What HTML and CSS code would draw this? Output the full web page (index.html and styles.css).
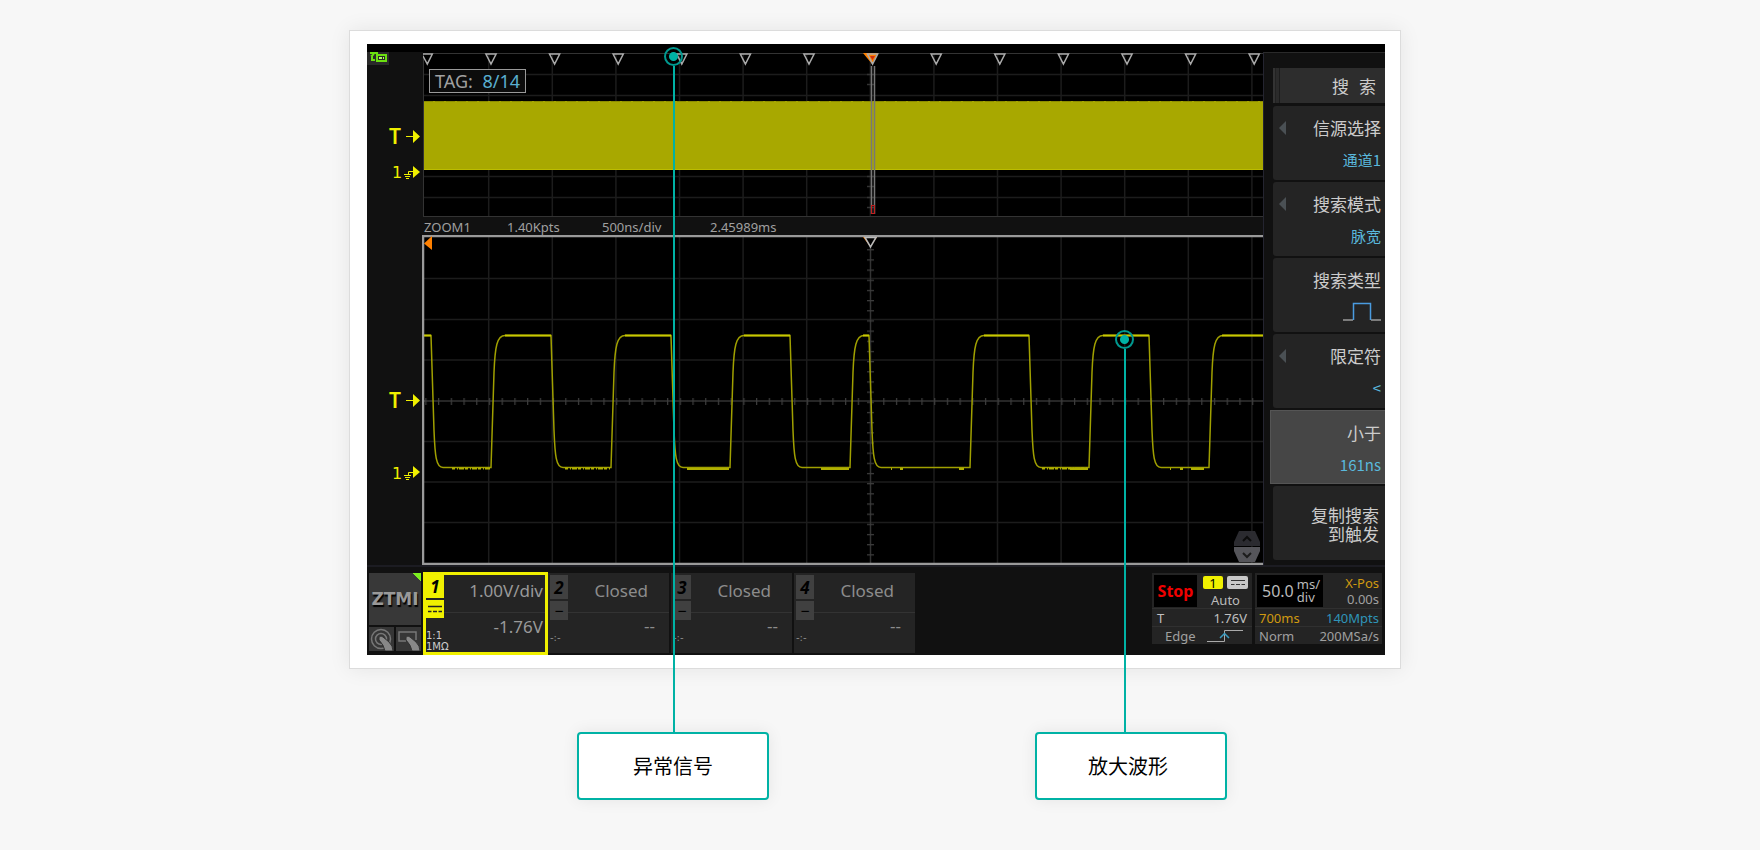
FILE: index.html
```html
<!doctype html>
<html lang="zh-CN">
  <head>
    <meta charset="UTF-8" />
    <meta name="viewport" content="width=device-width, initial-scale=1.0" />
    <title>异常信号搜索</title>
    <link rel="stylesheet" href="styles.css">
  </head>
  <body>
    <main class="stage">
      <div class="card">
        <div class="screen">
          <div class="work">
            <svg class="gutter" viewBox="0 0 56 513" width="56" height="513">
              <!-- usb / remote indicator -->
              <rect x="0" y="0" width="22" height="13" fill="#2a2a2a" />
              <g fill="none" stroke="#6be010" stroke-width="2">
                <path d="M3 1H11M7 2L4 4.500M5 4V8H8" />
                <rect x="10" y="3" width="9" height="6" />
              </g>
              <path d="M12 5h3v2h-3zM16 5h1v2h-1z" fill="#b0ff60" />
              <g fill="#f0f000">
                <text class="mark-t" x="22" y="92">T</text>
                <path d="M39 84h7v-6l7 6.500-7 6.500v-6h-7z" />
                <text class="mark-n" x="25" y="126">1</text>
                <path d="M46 114l7 6-7 6z" />
                <text class="mark-t" x="22" y="356">T</text>
                <path d="M39 348h7v-6l7 6.500-7 6.500v-6h-7z" />
                <text class="mark-n" x="25" y="427">1</text>
                <path d="M46 414l7 6-7 6z" />
              </g>
              <g fill="none" stroke="#f0f000">
                <path d="M47 119.500H41.500V123M37 122.500H44M38 124.500H43M39 126.500H42" />
                <path d="M47 420.500H41.500V424M37 423.500H44M38 425.500H43M39 427.500H42" />
              </g>
            </svg>

            <div class="plots">
              <div class="overview">
                <svg class="plot" viewBox="0 0 840 165" height="165" preserveAspectRatio="none">
                  <path class="grid" d="M65.700 1V165M129.300 1V165M192.900 1V165M256.500 1V165M320.100 1V165M383.700 1V165M447.300 1V165M510.900 1V165M574.500 1V165M638.100 1V165M701.700 1V165M765.300 1V165M828.900 1V165M0 22.500H840M0 43.500H840M0 124.500H840M0 145.500H840" />
                  <path class="frame" d="M.5 165V1.500H840M0 164.500H840" />
                  <path class="axis" d="M444 32.500h7M444 22.500h7M444 134.500h7M444 124.500h7M444 145.500h7M444 155.500h7" />
                  <rect x="1" y="49" width="839" height="69" fill="#a8a800" />
                  <path d="M1 117.500H840" stroke="#bcbc00" />
                  <path d="M1 49.500H840" stroke="#8c8c00" stroke-dasharray="9 2" />
                  <path d="M440 1H455L449 12z" fill="#ff8000" />
                  <path d="M448.500 14V162M451.500 14V162" stroke="#777" stroke-width="1.500" />
                  <rect x="448.500" y="153.500" width="3" height="8" fill="none" stroke="#c02020" />
                  <path class="tags" d="M0 2H9.300L4.300 12L0 4M62.900 2H73.100L68 12zM126.500 2H136.700L131.600 12zM190.100 2H200.300L195.200 12zM253.700 2H263.900L258.800 12zM317.300 2H327.500L322.400 12zM380.900 2H391.100L386 12zM444.500 2H454.700L449.600 12zM508.100 2H518.300L513.200 12zM571.700 2H581.900L576.800 12zM635.300 2H645.500L640.400 12zM698.900 2H709.100L704 12zM762.500 2H772.700L767.600 12zM826.100 2H836.300L831.200 12z" />
                  <path d="M447 4h5l-2.500 4z" fill="#d03010" />
                </svg>
                <div class="tag-count">TAG: <span>8/14</span></div>
              </div>

              <div class="zoom-info">
                <span>ZOOM1</span>
                <span>1.40Kpts</span>
                <span>500ns/div</span>
                <span>2.45989ms</span>
              </div>

              <div class="zoomed">
                <svg class="plot" viewBox="0 0 841 330" height="330" preserveAspectRatio="none">
                  <defs>
                    <pattern id="ticks-x" x="16" y="0" width="12.72" height="7" patternUnits="userSpaceOnUse">
                      <path d="M.5 0V7" stroke="#3c3c3c" stroke-width="1.500" />
                    </pattern>
                    <pattern id="ticks-y" x="0" y="4" width="7" height="10.170" patternUnits="userSpaceOnUse">
                      <path d="M0 .5H7" stroke="#3c3c3c" stroke-width="1.500" />
                    </pattern>
                  </defs>
                  <path class="grid" d="M66.700 2V329M130.300 2V329M193.900 2V329M257.500 2V329M321.100 2V329M384.700 2V329M512 2V329M575.500 2V329M639.100 2V329M702.700 2V329M766.300 2V329M829.900 2V329M2 43.500H841M2 84.500H841M2 125H841M2 206.500H841M2 247H841M2 287.500H841" />
                  <path class="axis" d="M448.500 2V329M2 166H841" />
                  <g transform="translate(0 163)">
                    <rect x="2" width="839" height="7" fill="url(#ticks-x)" />
                  </g>
                  <g transform="translate(445 0)">
                    <rect y="2" width="7" height="326" fill="url(#ticks-y)" />
                  </g>
                  <path class="wave" d="M2 100.500H9l3 95c1 25 2 37 9 37H69l3-95c1-26 3-37 11-37H129l3 95c1 25 2 37 9 37H189l3-95c1-26 3-37 11-37H249l3 95c1 25 2 37 9 37H308l3-95c1-26 3-37 11-37H368l3 95c1 25 2 37 9 37H428l3-95c1-26 3-37 11-37H447l3 95c1 25 2 37 9 37H548l3-95c1-26 3-37 11-37H607l3 95c1 25 2 37 9 37H667l3-95c1-26 3-37 11-37H727l3 95c1 25 2 37 9 37H787l3-95c1-26 3-37 11-37H841" />
                  <path class="wave-top" d="M2 100.500H9M83 100.500H129M203 100.500H249M322 100.500H368M441 100.500H447M562 100.500H607M681 100.500H727M800 100.500H841" />
                  <path class="noise" d="M30 233.500H68M143 233.500H188M620 233.500H666" />
                  <path class="noise-low" d="M265 234H307M399 234H427M469 234h1M478 234h3M537 234h5M648 234H666M748 234h1M758 234h3M769 234H782" />
                  <path d="M0 1H841M1 0V330M0 329H841" stroke="#9a9a9a" stroke-width="2.500" />
                  <path d="M2 8.500L10 1V15z" fill="#ff8000" />
                  <path d="M441 2H455L448.500 12z" fill="#ff8000" />
                  <path d="M443 2.500H454L448.500 12z" fill="#000" stroke="#bbb" stroke-width="1.500" />
                </svg>
                <div class="scroller">
                  <button class="scroll-up" aria-label="上移">
                    <svg viewBox="0 0 26 15" width="26" height="15">
                      <path d="M5 0H21L26 11V15H0V11z" fill="#2b2b30" />
                      <path d="M9 10l4-4 4 4" fill="none" stroke="#0c0c0c" stroke-width="2" />
                    </svg>
                  </button>
                  <button class="scroll-down" aria-label="下移">
                    <svg viewBox="0 0 26 15" width="26" height="15">
                      <path d="M0 0H26V4L21 15H5L0 4z" fill="#55555a" />
                      <path d="M9 6l4 4 4-4" fill="none" stroke="#1c1c1c" stroke-width="2" />
                    </svg>
                  </button>
                </div>
              </div>
            </div>

            <nav class="menu">
              <h1 class="menu-title"><span>搜</span><span>索</span></h1>
              <button class="menu-item has-more"><span>信源选择</span><span class="value">通道1</span></button>
              <button class="menu-item has-more"><span>搜索模式</span><span class="value">脉宽</span></button>
              <button class="menu-item">
                <span>搜索类型</span>
                <svg class="pulse" viewBox="0 0 38 20" width="38" height="20" fill="none">
                  <path d="M0 18H10M28 18H38" stroke="#999" stroke-width="1.500" />
                  <path d="M10.500 18V1.500H27.500V18" stroke="#4a9be0" stroke-width="1.500" />
                </svg>
              </button>
              <button class="menu-item has-more"><span>限定符</span><span class="value">&lt;</span></button>
              <button class="menu-item active"><span>小于</span><span class="value">161ns</span></button>
              <button class="menu-item copy"><span>复制搜索<br>到触发</span></button>
            </nav>
          </div>

          <footer class="status">
            <div class="brand">
              <div class="logo">ZTMI</div>
              <button class="touch" aria-label="触摸">
                <svg viewBox="0 0 25 24" width="25" height="24">
                  <g fill="none" stroke="#777" stroke-width="1.500">
                    <circle cx="12" cy="12" r="9.500" />
                    <circle cx="12" cy="12" r="5.500" />
                  </g>
                  <path d="M10 10q2-2 4 0l6 5q4 4 4 9h-8q-1-6-6-11z" fill="#888" stroke="#333" />
                </svg>
              </button>
              <button class="touch" aria-label="按键">
                <svg viewBox="0 0 25 24" width="25" height="24">
                  <path d="M20 13V5H3V14H10" fill="none" stroke="#777" stroke-width="1.500" />
                  <path d="M10 10q2-2 4 0l6 5q4 4 4 9h-8q-1-6-6-11z" fill="#888" stroke="#333" />
                </svg>
              </button>
            </div>

            <button class="channel on">
              <span class="side">
                <b>1</b>
                <i><svg viewBox="0 0 16 8" width="16" height="8"><path d="M1 1.500H15M1 6.500H4.500M6 6.500H10M11.500 6.500H15" stroke="#222" stroke-width="1.500" /></svg></i>
                <small>1:1<br>1MΩ</small>
              </span>
              <span class="reading"><span>1.00V/div</span><span>-1.76V</span></span>
            </button>
            <button class="channel">
              <span class="side"><b>2</b><i>−</i><small>-:-</small></span>
              <span class="reading"><span>Closed</span><span>--</span></span>
            </button>
            <button class="channel">
              <span class="side"><b>3</b><i>−</i><small>-:-</small></span>
              <span class="reading"><span>Closed</span><span>--</span></span>
            </button>
            <button class="channel">
              <span class="side"><b>4</b><i>−</i><small>-:-</small></span>
              <span class="reading"><span>Closed</span><span>--</span></span>
            </button>

            <div class="box trigger">
              <div class="box-head">
                <strong class="stop">Stop</strong>
                <div class="source">
                  <span class="src">1</span>
                  <span class="coupling"><svg viewBox="0 0 16 8" width="16" height="8"><path d="M1 1.500H15M1 5.500H4.500M6 5.500H10M11.500 5.500H15" stroke="#333" /></svg></span>
                  <span class="auto">Auto</span>
                </div>
              </div>
              <div class="row bright"><span>T</span><span>1.76V</span></div>
              <div class="row edge">
                <span>Edge</span>
                <svg viewBox="0 0 36 14" width="36" height="14" fill="none">
                  <path d="M0 12.500H17.500V1.500H36" stroke="#aaa" />
                  <path d="M13 9l4.500-4.500L22 9" stroke="#3a9cc0" stroke-width="1.500" />
                </svg>
              </div>
            </div>

            <div class="box timebase">
              <div class="box-head">
                <div class="scale"><span>50.0</span><span class="unit">ms/<br>div</span></div>
                <div class="pos"><span class="amber">X-Pos</span><span>0.00s</span></div>
              </div>
              <div class="row"><span class="amber">700ms</span><span class="blue">140Mpts</span></div>
              <div class="row"><span>Norm</span><span>200MSa/s</span></div>
            </div>
          </footer>
        </div>
      </div>

      <div class="callouts">
        <div class="callout abnormal">
          <span class="dot"></span>
          异常信号
        </div>
        <div class="callout enlarged">
          <span class="dot"></span>
          放大波形
        </div>
      </div>
    </main>
  </body>
</html>
```

FILE: styles.css
```css
* {
  box-sizing: border-box;
}
body {
  margin: 0;
  background-color: #f7f7f7;
  font-family: "Noto Sans", "Noto Sans CJK SC", sans-serif;
}
button {
  border: none;
  padding: 0;
  font: inherit;
  color: inherit;
  cursor: pointer;
}
svg {
  display: block;
}
.stage {
  max-width: 1062px;
  margin: 0 auto;
  padding: 30px 10px 40px 0;
}
.card {
  padding: 13px 15px 13px 17px;
  background-color: #fff;
  border: 1px solid #dcdcdc;
  box-shadow: 0 0 20px rgba(0, 0, 0, 0.08);
}
.screen {
  padding-top: 8px;
  background-color: #000;
  color: #a0a0a0;
}

/* plots */
.work {
  display: grid;
  grid-template-columns: 55px 1fr 122px;
  background-color: #111;
}
.gutter {
  width: 56px;
}
.mark-t {
  font: 600 21px "Noto Sans", sans-serif;
}
.mark-n {
  font: 16px "DejaVu Sans", sans-serif;
}
.overview {
  position: relative;
  margin-left: 1px;
  background-color: #000;
}
.plot {
  width: 100%;
}
.grid {
  stroke: #1c1c1c;
  stroke-width: 1.5;
}
.frame {
  fill: none;
  stroke: #333;
}
.axis {
  stroke: #333;
  stroke-width: 1.5;
}
.tags {
  fill: none;
  stroke: #aaa;
  stroke-width: 1.5;
}
.tag-count {
  position: absolute;
  left: 6px;
  top: 17px;
  height: 24px;
  padding: 0 5px;
  border: 1px solid #999;
  background-color: #0c0c0c;
  font-size: 18px;
  line-height: 22px;
  white-space: pre;
}
.tag-count span {
  color: #5aafd0;
  margin-left: 5px;
}
.zoom-info {
  display: grid;
  grid-template-columns: 83px 95px 108px 1fr;
  height: 18px;
  padding-left: 2px;
  font-size: 13px;
  line-height: 20px;
}
.zoomed {
  position: relative;
  background-color: #000;
}
.wave {
  fill: none;
  stroke: #a0a000;
  stroke-width: 1.5;
}
.wave-top {
  stroke: #c8c800;
  stroke-width: 2;
}
.noise,
.noise-low {
  stroke: #b0b000;
  stroke-width: 2;
}
.noise {
  stroke-dasharray: 3 2 1 1 5 1;
}
.scroller {
  position: absolute;
  right: 3px;
  bottom: 3px;
}
.scroller button {
  display: block;
  background: none;
  margin-top: 1px;
}

/* side menu */
.menu {
  display: flex;
  flex-direction: column;
  gap: 2px;
  padding: 15px 0 3px 6px;
  border-top: 1px solid #2a2a2a;
  border-left: 1px solid #242430;
  color: #ccc;
  font-family: "Noto Sans CJK SC", sans-serif;
  font-size: 17px;
}
.menu-title {
  display: flex;
  justify-content: flex-end;
  gap: 10px;
  height: 35px;
  margin: 0 0 1px 3px;
  padding-right: 9px;
  background: linear-gradient(90deg, #333 2px, #222 2px, #222 3px, #2b2b2b 3px, #2b2b2b 6px, #1c1c1c 6px, #1c1c1c 7px, #2d2d2d 7px);
  font-size: 17px;
  font-weight: normal;
  line-height: 35px;
}
.menu-item {
  position: relative;
  display: flex;
  flex-direction: column;
  align-items: flex-end;
  height: 74px;
  margin-left: 3px;
  padding: 10px 4px 0 0;
  border-radius: 3px 0 0 3px;
  background-color: #242424;
  line-height: 24px;
}
.menu-item .value {
  margin-top: 8px;
  color: #5ab8dc;
  font-size: 15px;
}
.menu-item.active {
  margin-left: 0;
  border: 1px solid #555;
  border-right: none;
  border-radius: 0;
  background-color: #464646;
}
.has-more::before {
  content: "";
  position: absolute;
  left: 6px;
  top: 15px;
  border: 7px solid transparent;
  border-left: none;
  border-right-color: #4a5054;
}
.pulse {
  margin-top: 10px;
}
.menu-item.copy {
  padding: 19px 6px 0 0;
  line-height: 19px;
  text-align: right;
}

/* bottom bar */
.status {
  display: flex;
  align-items: flex-start;
  gap: 2px;
  height: 90px;
  padding: 6px 3px 0 2px;
  border-top: 2px solid #1c1c22;
  background-color: #111;
}
.brand {
  display: grid;
  grid-template-columns: 25px 25px;
  gap: 2px;
}
.logo {
  grid-column: 1 / 3;
  height: 52px;
  background: linear-gradient(225deg, #7cf020 6px, #383838 6px);
  font: bold 17px/52px "DejaVu Sans", sans-serif;
  text-align: center;
  color: #999;
  text-shadow: 1px 2px 1px #000;
}
.touch {
  height: 24px;
  background-color: #363636;
}
.channel {
  display: flex;
  width: 121px;
  height: 80px;
  padding: 2px 0 0 2px;
  background-color: #242424;
  color: #8c8c8c;
  text-align: left;
}
.channel.on {
  width: 125px;
  height: 83px;
  margin: -1px -2px 0 0;
  padding: 0;
  border: 3px solid #f0f000;
  color: #999;
}
.side {
  display: flex;
  flex-direction: column;
  flex: none;
  gap: 2px;
  width: 18px;
}
.side b,
.side i {
  display: flex;
  align-items: center;
  justify-content: center;
  background-color: #404040;
  color: #000;
}
.side b {
  height: 24px;
  font-size: 17px;
  font-style: italic;
}
.side i {
  height: 19px;
  font-style: normal;
}
.on .side b,
.on .side i {
  background-color: #f0f000;
}
.side small {
  margin-top: 10px;
  font: 10px/11px "DejaVu Sans", sans-serif;
  white-space: nowrap;
}
.on .side small {
  color: #ccc;
}
.reading {
  display: flex;
  flex-direction: column;
  flex: 1;
  font-size: 17px;
}
.reading span {
  height: 37px;
  padding-right: 21px;
  line-height: 32px;
  text-align: right;
}
.reading span + span {
  padding-right: 14px;
  border-top: 1px solid #333;
  line-height: 26px;
}
.on .reading span {
  padding-right: 2px;
}
.on .reading span + span {
  line-height: 28px;
}
.box {
  flex: none;
  height: 71px;
  background-color: #242424;
  font-size: 13px;
}
.trigger {
  width: 100px;
  margin-left: auto;
}
.timebase {
  width: 127px;
  margin-left: 1px;
}
.box-head {
  display: flex;
  height: 35px;
  padding: 2px 3px 1px 2px;
}
.stop {
  width: 43px;
  background-color: #000;
  color: #f00000;
  font-size: 16px;
  line-height: 33px;
  text-align: center;
}
.source {
  display: grid;
  grid-template-columns: 20px 21px;
  grid-template-rows: 13px 1fr;
  gap: 2px 4px;
  padding: 1px 0 0 6px;
  color: #bbb;
}
.src,
.coupling {
  display: flex;
  align-items: center;
  justify-content: center;
  border-radius: 2px;
  background-color: #f0f000;
  color: #000;
}
.coupling {
  background-color: #c8c8c8;
}
.auto {
  grid-column: 1 / 3;
  line-height: 18px;
  text-align: center;
}
.row {
  display: flex;
  justify-content: space-between;
  height: 18px;
  padding: 0 5px;
  border-top: 1px solid #303030;
  line-height: 18px;
}
.bright {
  color: #c0c0c0;
}
.edge {
  padding: 0 9px 0 13px;
  align-items: center;
}
.timebase .row {
  padding: 0 3px 0 4px;
}
.scale {
  display: flex;
  align-items: center;
  justify-content: space-between;
  width: 66px;
  padding: 0 3px 0 5px;
  background-color: #000;
  color: #bbb;
  font-size: 16px;
}
.unit {
  font-size: 13px;
  line-height: 13px;
}
.pos {
  display: flex;
  flex-direction: column;
  flex: 1;
  line-height: 16px;
  text-align: right;
}
.amber {
  color: #d09a10;
}
.blue {
  color: #2f94b8;
}

/* callouts under the screen */
.callouts {
  display: flex;
  gap: 266px;
  margin-top: 63px;
  padding-left: 228px;
}
.callout {
  position: relative;
  width: 192px;
  height: 68px;
  border: 2px solid #00b2a5;
  border-radius: 4px;
  background-color: #fff;
  box-shadow: 0 0 16px rgba(0, 0, 0, 0.08);
  color: #000;
  font: 20px/64px "Noto Sans CJK SC", sans-serif;
  text-align: center;
}
.callout::before {
  content: "";
  position: absolute;
  left: 94px;
  bottom: 100%;
  width: 2px;
  height: 668px;
  background-color: #00b2a5;
}
.dot {
  position: absolute;
  left: 85px;
  bottom: 732px;
  width: 19px;
  height: 19px;
  border: 2px solid #00988f;
  border-radius: 50%;
  background: radial-gradient(circle, #00b2a5 4px, transparent 5px);
}
.enlarged {
  padding-right: 6px;
}
.enlarged::before {
  left: 87px;
  height: 385px;
}
.enlarged .dot {
  left: 78px;
  bottom: 449px;
}
```
